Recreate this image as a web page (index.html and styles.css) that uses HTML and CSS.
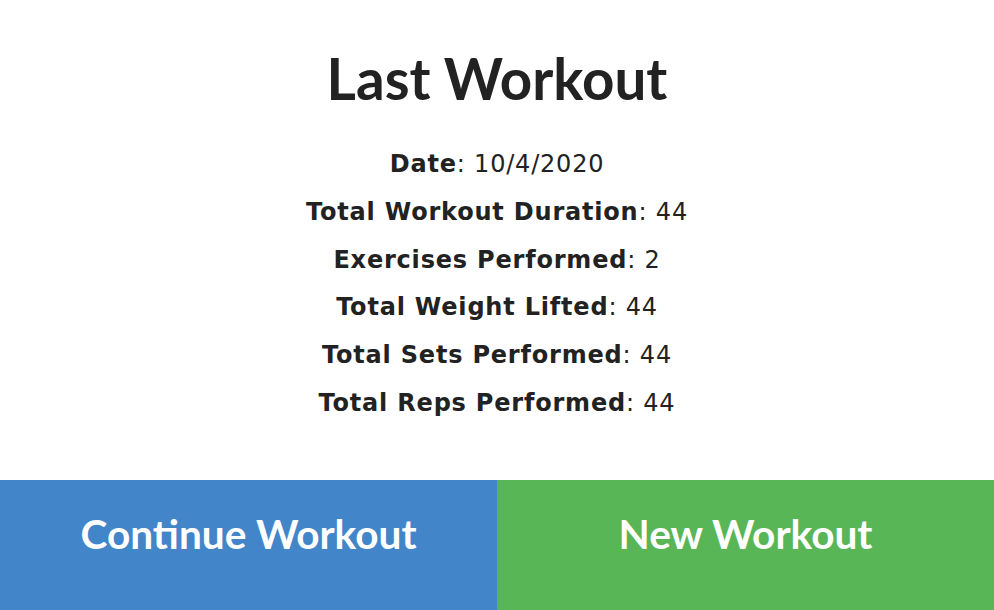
FILE: index.html
```html
<!DOCTYPE html>
<html>
<head>
<meta charset="utf-8">
<link rel="stylesheet" href="styles.css">
</head>
<body>
<div class="page">
  <main class="summary">
    <h1 class="title">Last Workout</h1>
    <ul class="stats">
      <li><b>Date</b>: 10/4/2020</li>
      <li><b>Total Workout Duration</b>: 44</li>
      <li><b>Exercises Performed</b>: 2</li>
      <li><b>Total Weight Lifted</b>: 44</li>
      <li><b>Total Sets Performed</b>: 44</li>
      <li><b>Total Reps Performed</b>: 44</li>
    </ul>
  </main>
  <div class="actions">
    <button class="btn btn-continue">Continue Workout</button>
    <button class="btn btn-new">New Workout</button>
  </div>
</div>
</body>
</html>
```
FILE: styles.css
```css
html, body {
  margin: 0;
  padding: 0;
  background: #fff;
}
.page {
  display: flex;
  flex-direction: column;
  height: 610px;
}
.summary {
  flex: 1;
  display: flex;
  flex-direction: column;
  align-items: center;
  color: #222;
}
.title {
  font-family: Lato, "Liberation Sans", sans-serif;
  font-weight: 700;
  font-size: 56.5px;
  line-height: 66px;
  margin: 45px 0 0;
}
.stats {
  list-style: none;
  margin: 30px 0 0;
  padding: 0;
  font-family: "DejaVu Sans", Verdana, sans-serif;
  font-size: 24px;
  text-align: center;
}
.stats li {
  line-height: 47.8px;
  letter-spacing: 0.8px;
}
.stats b {
  font-weight: 700;
}
.actions {
  display: flex;
  height: 130px;
}
.btn {
  flex: 1;
  border: 0;
  margin: 0;
  padding: 0 0 24px;
  color: #fff;
  font-family: Lato, "Liberation Sans", sans-serif;
  font-weight: 700;
  font-size: 40.6px;
}
.btn-continue { background: #4285c9; }
.btn-new { background: #59b657; }
```
